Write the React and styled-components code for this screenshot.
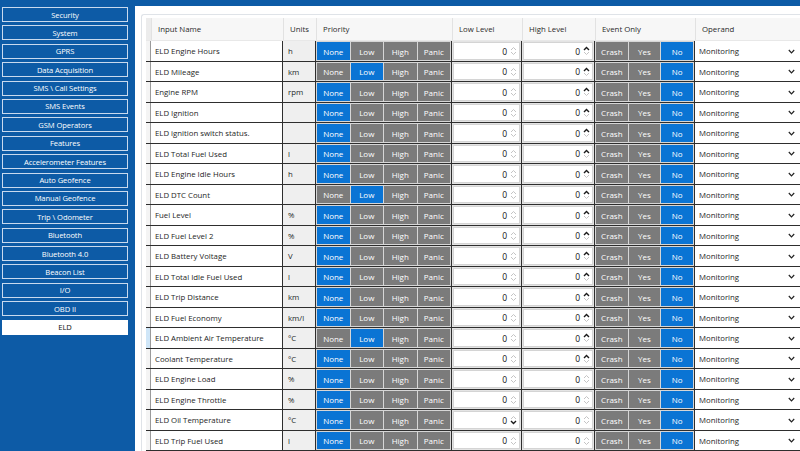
import styled, { createGlobalStyle } from "styled-components";

const menu = [
    'Security', 'System', 'GPRS', 'Data Acquisition', 'SMS \\ Call Settings', 'SMS Events',
    'GSM Operators', 'Features', 'Accelerometer Features', 'Auto Geofence', 'Manual Geofence',
    'Trip \\ Odometer', 'Bluetooth', 'Bluetooth 4.0', 'Beacon List', 'I/O', 'OBD II', 'ELD'
]

// name, unit, priority index, low-level down arrow dark
const rows = [
    ['ELD Engine Hours', 'h', 0],
    ['ELD Mileage', 'km', 1],
    ['Engine RPM', 'rpm', 0],
    ['ELD Ignition', '', 0],
    ['ELD ignition switch status.', '', 0],
    ['ELD Total Fuel Used', 'l', 0],
    ['ELD Engine Idle Hours', 'h', 0],
    ['ELD DTC Count', '', 1],
    ['Fuel Level', '%', 0],
    ['ELD Fuel Level 2', '%', 0],
    ['ELD Battery Voltage', 'V', 0],
    ['ELD Total Idle Fuel Used', 'l', 0],
    ['ELD Trip Distance', 'km', 0],
    ['ELD Fuel Economy', 'km/l', 0],
    ['ELD Ambient Air Temperature', '°C', 1],
    ['Coolant Temperature', '°C', 0],
    ['ELD Engine Load', '%', 0],
    ['ELD Engine Throttle', '%', 0],
    ['ELD Oil Temperature', '°C', 0, true],
    ['ELD Trip Fuel Used', 'l', 0],
]

const priorities = ['None', 'Low', 'High', 'Panic']
const events = ['Crash', 'Yes', 'No']

const Spinner = ({ upDark, downDark }) => (
    <Spin viewBox="0 0 7 12" width="7" height="12">
        <polyline points="1,5 3.5,2.5 6,5" fill="none" stroke={upDark ? '#1a1a1a' : '#c4c4c4'} strokeWidth={upDark ? 1.4 : 1} />
        <polyline points="1,7 3.5,9.5 6,7" fill="none" stroke={downDark ? '#1a1a1a' : '#c4c4c4'} strokeWidth={downDark ? 1.4 : 1} />
    </Spin>
)

const App = () => {
    return (
        <Page>
            <GlobalStyle />
            <Sidebar>
                {menu.map(m => (
                    <NavButton key={m} active={m === 'ELD'}>{m}</NavButton>
                ))}
            </Sidebar>
            <Panel>
                <Frame>
                    <HeaderRow>
                        <HeadCorner />
                        <HeaderCell>Input Name</HeaderCell>
                        <HeaderCell>Units</HeaderCell>
                        <HeaderCell>Priority</HeaderCell>
                        <HeaderCell>Low Level</HeaderCell>
                        <HeaderCell>High Level</HeaderCell>
                        <HeaderCell>Event Only</HeaderCell>
                        <HeaderCell>Operand</HeaderCell>
                    </HeaderRow>
                    {rows.map(([name, unit, prio, lowDown], i) => (
                        <Row key={name}>
                            <RowHead selected={i === 14} />
                            <NameCell>{name}</NameCell>
                            <UnitCell>{unit}</UnitCell>
                            <GroupCell>
                                {priorities.map((p, j) => (
                                    <Toggle key={p} on={j === prio}>{p}</Toggle>
                                ))}
                            </GroupCell>
                            <LevelCell>
                                <NumberBox>
                                    <span>0</span>
                                    <Spinner downDark={lowDown} />
                                </NumberBox>
                            </LevelCell>
                            <LevelCell>
                                <NumberBox>
                                    <span>0</span>
                                    <Spinner upDark={i < 16} />
                                </NumberBox>
                            </LevelCell>
                            <GroupCell>
                                {events.map(e => (
                                    <Toggle key={e} on={e === 'No'}>{e}</Toggle>
                                ))}
                            </GroupCell>
                            <OperandCell>
                                Monitoring
                                <svg width="7" height="5" viewBox="0 0 7 5">
                                    <polyline points="0.8,1 3.5,3.8 6.2,1" fill="none" stroke="#222" strokeWidth="1.2" />
                                </svg>
                            </OperandCell>
                        </Row>
                    ))}
                </Frame>
            </Panel>
        </Page>
    )
}

const GlobalStyle = createGlobalStyle`
    html, body {
        margin: 0;
        padding: 0;
        background: #0d5ba6;
        overflow: hidden;
    }
    body {
        font-family: 'Open Sans', 'Liberation Sans', sans-serif;
        font-size: 7.8px;
    }
`

const COLUMNS = '5px 132px 33px 136px 70px 73px 100px 110px'

const Page = styled.div`
    width: 800px;
    height: 451px;
    display: flex;
    overflow: hidden;
    background: #0d5ba6;
`

const Sidebar = styled.div`
    width: 126px;
    flex-shrink: 0;
    padding: 7px 7px 0 2px;
    display: flex;
    flex-direction: column;
    gap: 3.4px;
`

const NavButton = styled.div`
    height: 15px;
    box-sizing: border-box;
    border: 1px solid ${props => props.active ? '#ffffff' : '#c9daee'};
    background: ${props => props.active ? '#ffffff' : '#0d5ba6'};
    color: ${props => props.active ? '#111111' : '#ffffff'};
    display: flex;
    align-items: center;
    justify-content: center;
    font-size: 7.6px;
    letter-spacing: -0.1px;
    white-space: nowrap;
`

const Panel = styled.div`
    flex: 1;
    margin-top: 6px;
    background: #ffffff;
    padding: 8px 0 0 6px;
    overflow: hidden;
`

const Frame = styled.div`
    height: 100%;
    box-sizing: border-box;
    border: 1px solid #dfe3e8;
    border-right: none;
    border-bottom: none;
    border-radius: 3px 0 0 0;
    padding: 3px 0 0 4px;
    background: #ffffff;
`

const HeaderRow = styled.div`
    display: grid;
    grid-template-columns: ${COLUMNS};
    height: 23px;
    background: #f7f7f7;
    border-bottom: 1px solid #e8e8e8;
    box-sizing: border-box;
`

const HeadCorner = styled.div`
    background: #ececec;
`

const HeaderCell = styled.div`
    display: flex;
    align-items: center;
    padding-left: 6px;
    color: #2a2a2a;
    border-left: 1px solid #e2e2e2;
    white-space: nowrap;
`

const Row = styled.div`
    display: grid;
    grid-template-columns: ${COLUMNS};
    height: 21px;
    box-sizing: border-box;
    border-bottom: 1px solid #2e2e2e;

    &:nth-child(odd) {
        height: 20px;
    }
`

const RowHead = styled.div`
    background: ${props => props.selected ? '#cfe6f8' : '#f4f4f4'};
    border-right: 1px solid #9a9a9a;
`

const NameCell = styled.div`
    display: flex;
    align-items: center;
    padding-left: 4px;
    background: #ffffff;
    color: #1e1e1e;
    border-right: 1px solid #2e2e2e;
    white-space: nowrap;
    overflow: hidden;
`

const UnitCell = styled(NameCell)`
    background: #efefef;
    padding-left: 5px;
`

const GroupCell = styled.div`
    display: flex;
    gap: 1px;
    padding: 1px;
    background: #d6d6d6;
    border-right: 1px solid #2e2e2e;
`

const Toggle = styled.div`
    flex: 1;
    display: flex;
    align-items: center;
    justify-content: center;
    background: ${props => props.on ? '#0a74d4' : '#7b7b7b'};
    color: #ffffff;
    font-size: 8px;
`

const LevelCell = styled.div`
    padding: 1px;
    background: #e4e4e4;
    border-right: 1px solid #2e2e2e;
    display: flex;
`

const NumberBox = styled.div`
    flex: 1;
    display: flex;
    align-items: center;
    justify-content: flex-end;
    gap: 3px;
    padding-right: 2px;
    background: #ffffff;
    border: 1px solid #d4d4d4;
    color: #111111;
    font-size: 8.5px;
`

const Spin = styled.svg`
    display: block;
`

const OperandCell = styled.div`
    display: flex;
    align-items: center;
    justify-content: space-between;
    padding: 0 10px 0 4px;
    background: #ffffff;
    color: #1e1e1e;
`

export default App;
